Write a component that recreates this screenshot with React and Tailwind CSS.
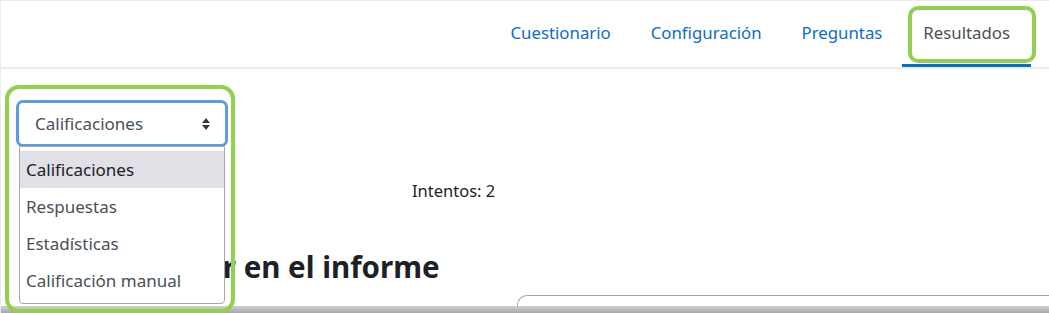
export default function App() {
  const tabs = ['Cuestionario', 'Configuración', 'Preguntas'];
  const options = ['Calificaciones', 'Respuestas', 'Estadísticas', 'Calificación manual'];

  return (
    <div className="relative flex h-[313px] w-[1049px] flex-col overflow-hidden border-l border-t border-[#ebebeb] bg-white font-['Noto_Sans',sans-serif]">
      <nav className="flex h-[68px] shrink-0 justify-end border-b-2 border-[#e9ecef] pr-[18px]">
        {tabs.map((t) => (
          <a key={t} className="flex items-center px-[20px] pb-[3px] text-[16.8px] text-[#0f6cbf]">
            {t}
          </a>
        ))}
        <a className="flex items-center border-b-[3px] border-[#0f6cbf] pl-[21px] pr-[21px] text-[16.8px] text-[#495057]">
          Resultados
        </a>
      </nav>

      <main className="flex min-h-0 flex-1 flex-col overflow-hidden pl-[15px] pt-[31px]">
        <div className="flex h-[47px] w-[212px] shrink-0 items-center justify-between rounded-[7px] border-[3px] border-[#5c9de0] pl-[16px] pr-[14px] text-[17px] text-[#495057]">
          <span>Calificaciones</span>
          <svg width="10" height="14" viewBox="0 0 10 14" className="text-[#343a40]">
            <path d="M5 1 L9 6 H1 Z M5 13 L9 8 H1 Z" fill="currentColor" />
          </svg>
        </div>
        <div className="mt-[32px] pl-[396px] text-[16.5px] text-[#1d2125]">Intentos: 2</div>
        <div className="mt-[48px] flex items-center gap-[10px] pl-[35px]">
          <svg width="14" height="14" viewBox="0 0 14 14" className="text-[#0f6cbf]">
            <path d="M3 5 L7 9 L11 5" fill="none" stroke="currentColor" strokeWidth="2" />
          </svg>
          <h2 className="text-[29.5px] font-bold leading-none text-[#1d2125]">Qué incluir en el informe</h2>
        </div>
        <div className="ml-[501px] mt-[14px] h-[40px] shrink-0 rounded-tl-[10px] border-l border-t border-[#a0a4a8]" />
      </main>

      <div className="h-[7px] shrink-0 bg-gradient-to-b from-[#d0d0d0] to-[#a8a8a8]" />

      {/* open dropdown list */}
      <ul className="absolute left-[18px] top-[145px] w-[206px] rounded-b-[4px] border border-[#a8a8a8] bg-white py-[4px] text-[17px]">
        {options.map((o, i) => (
          <li
            key={o}
            className={i === 0 ? 'h-[37px] bg-[#e0e0e6] pl-[6px] leading-[37px] text-[#1d2125]' : 'h-[37px] pl-[6px] leading-[37px] text-[#495057]'}
          >
            {o}
          </li>
        ))}
      </ul>

      {/* annotation highlights */}
      <div className="absolute left-[907px] top-[5px] h-[57px] w-[128px] rounded-[10px] border-[4px] border-[#92d050]" />
      <div className="absolute left-[4px] top-[84px] h-[228px] w-[230px] rounded-[14px] border-[4px] border-[#92d050]" />
    </div>
  );
}
